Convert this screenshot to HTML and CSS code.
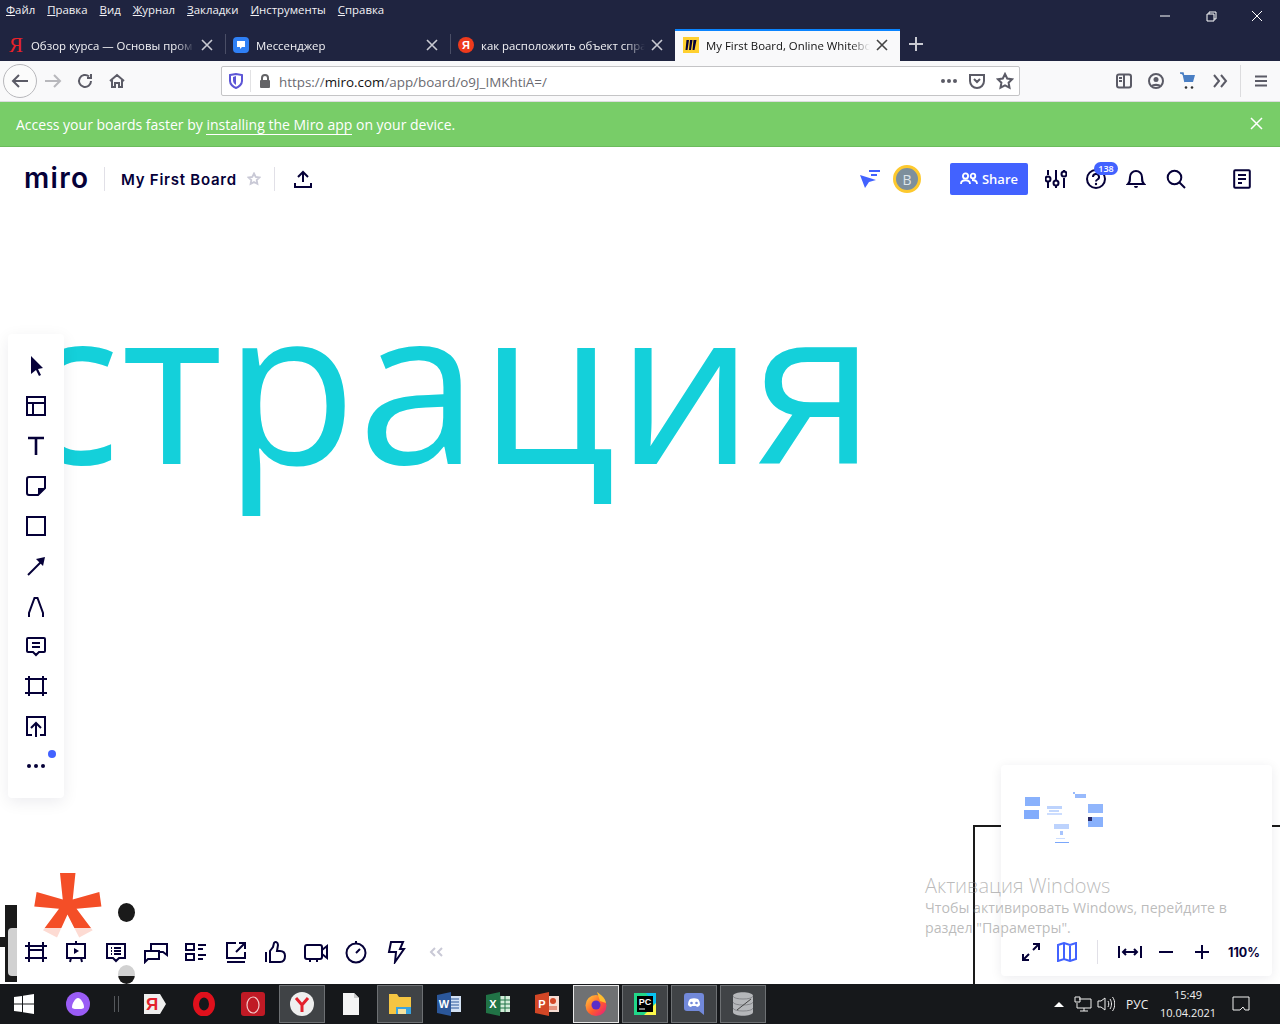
FILE: index.html
```html
<!DOCTYPE html>
<html lang="ru">
<head>
<meta charset="utf-8">
<title>My First Board, Online Whiteboard</title>
<link rel="stylesheet" href="styles.css">
</head>
<body>
<div class="screen">
  <header class="titlebar">
    <nav class="menu">
      <span><u>Ф</u>айл</span><span><u>П</u>равка</span><span><u>В</u>ид</span><span><u>Ж</u>урнал</span><span><u>З</u>акладки</span><span><u>И</u>нструменты</span><span><u>С</u>правка</span>
    </nav>
    <div class="winctl">
      <svg width="46" height="27" viewBox="0 0 46 27"><path d="M18 16h10" class="wl"/></svg>
      <svg width="46" height="27" viewBox="0 0 46 27"><path d="M19 14h7v7h-7zM21 14v-2h7v7h-2" class="wl"/></svg>
      <svg width="46" height="27" viewBox="0 0 46 27"><path d="M18 11l10 10M28 11L18 21" class="wl"/></svg>
    </div>
  </header>
  <div class="tabs">
    <div class="tab">
      <span class="fav ya">Я</span><span class="tt">Обзор курса — Основы пром</span>
      <svg class="tx" width="12" height="12" viewBox="0 0 12 12"><path d="M1 1l10 10M11 1L1 11"/></svg>
    </div>
    <div class="tab sep">
      <svg class="fav" width="16" height="16" viewBox="0 0 16 16"><rect width="16" height="16" rx="4" fill="#2f80f5"/><path d="M4 4h8v6H9l-2 2v-2H4z" fill="#fff"/></svg><span class="tt">Мессенджер</span>
      <svg class="tx" width="12" height="12" viewBox="0 0 12 12"><path d="M1 1l10 10M11 1L1 11"/></svg>
    </div>
    <div class="tab sep">
      <svg class="fav" width="16" height="16" viewBox="0 0 16 16"><circle cx="8" cy="8" r="8" fill="#ee3a1c"/><text x="8" y="12" class="favt">Я</text></svg><span class="tt">как расположить объект спра</span>
      <svg class="tx" width="12" height="12" viewBox="0 0 12 12"><path d="M1 1l10 10M11 1L1 11"/></svg>
    </div>
    <div class="tab active">
      <svg class="fav" width="16" height="16" viewBox="0 0 16 16"><rect width="16" height="16" fill="#ffd02f"/><path d="M3.500 3h2.500L4.500 13H2.500zM7 3h2.500L8 13H6zM10.500 3H13.500L11.500 13H9.500z" fill="#050038"/></svg><span class="tt">My First Board, Online Whitebo</span>
      <svg class="tx" width="12" height="12" viewBox="0 0 12 12"><path d="M1 1l10 10M11 1L1 11"/></svg>
    </div>
    <svg class="newtab" width="14" height="14" viewBox="0 0 14 14"><path d="M7 0v14M0 7h14"/></svg>
  </div>
  <div class="navbar">
    <div class="back"><svg width="18" height="18" viewBox="0 0 18 18"><path d="M17 9H2M8 3L2 9l6 6" class="ni"/></svg></div>
    <svg class="nb" width="32" height="18" viewBox="0 0 32 18"><path d="M8 9h15M17 3l6 6-6 6" class="ni dim"/></svg>
    <svg class="nb" width="32" height="18" viewBox="0 0 32 18"><path d="M22 9a6 6 0 1 1-2-4.500M22 2v4h-4" class="ni"/></svg>
    <svg class="nb" width="32" height="18" viewBox="0 0 32 18"><path d="M9 9l7-6 7 6M11 8v7h3v-4h4v4h3V8" class="ni"/></svg>
    <div class="urlbar">
      <svg class="shield" width="14" height="16" viewBox="0 0 14 16"><path d="M1 2l6-1 6 1v6c0 3-3 6-6 7-3-1-6-4-6-7z" fill="none" stroke="#5c55d6" stroke-width="2"/><path d="M7 3v9c-2-1-3-3-3-5V4z" fill="#5c55d6"/></svg>
      <span class="ubsep"></span>
      <svg class="lock" width="14" height="16" viewBox="0 0 14 16"><path d="M4 7V5a3 3 0 0 1 6 0v2" fill="none" stroke="#636366" stroke-width="2"/><rect x="2" y="7" width="10" height="8" rx="1" fill="#636366"/></svg>
      <span class="url">https://<b>miro.com</b>/app/board/o9J_IMKhtiA=/</span>
      <span class="ubdots"><i></i><i></i><i></i></span>
      <svg class="ubi" width="18" height="18" viewBox="0 0 18 18"><path d="M2 3h14v6a7 7 0 0 1-14 0zM6 7l3 3 3-3" class="ni"/></svg>
      <svg class="ubi" width="18" height="18" viewBox="0 0 18 18"><path d="M9 2l2.200 4.500 5 .7-3.600 3.500.9 5L9 13.300 4.500 15.700l.9-5L1.800 7.200l5-.7z" class="ni"/></svg>
    </div>
    <div class="navright">
      <svg width="32" height="18" viewBox="0 0 32 18"><rect x="9" y="2.500" width="14" height="13" rx="2" class="ni"/><path d="M16 3v12M11 6h3M11 9h3" class="ni"/></svg>
      <svg width="32" height="18" viewBox="0 0 32 18"><circle cx="16" cy="9" r="7" class="ni"/><circle cx="16" cy="7.500" r="2.500" fill="#5b5b66"/><path d="M11 14c1-3 9-3 10 0z" fill="#5b5b66"/></svg>
      <svg width="32" height="18" viewBox="0 0 32 18"><path d="M8 1h3l2 9h8l2-7H11z" fill="#4a7fc4"/><path d="M8 1h3l2 9" fill="none" stroke="#4a7fc4" stroke-width="1.500"/><circle cx="14" cy="15.500" r="1.300" fill="#333"/><circle cx="20" cy="15.500" r="1.300" fill="#333"/></svg>
      <svg width="32" height="18" viewBox="0 0 32 18"><path d="M10 3l5 6-5 6M17 3l5 6-5 6" class="ni"/></svg>
      <span class="navsep"></span>
      <svg width="12" height="12" viewBox="0 0 12 12"><path d="M0 1.500h12M0 6h12M0 10.500h12" class="ni"/></svg>
    </div>
  </div>
  <div class="banner">
    <p class="bantext">Access your boards faster by <a>installing the Miro app</a> on your device.</p>
    <svg class="banx" width="13" height="13" viewBox="0 0 13 13"><path d="M1 1l11 11M12 1L1 12"/></svg>
  </div>
  <main class="app">
    <div class="board">
      <div class="big">страция</div>
      <div class="aster">*</div>
      <div class="dot d1"></div>
      <div class="dot d2"></div>
      <div class="hbar"></div>
      <div class="hcross"></div>
      <div class="frame"></div>
    </div>
    <div class="topbar">
      <div class="logo">miro</div>
      <span class="tsep"></span>
      <div class="bname">My First Board</div>
      <svg class="bstar" width="14" height="14" viewBox="0 0 14 14"><path d="M7 1.500l1.700 3.500 3.800.5-2.800 2.600.7 3.800L7 10.100l-3.400 1.800.7-3.800L1.500 5.500l3.800-.5z" fill="none" stroke="#c9c9d6" stroke-width="1.800"/></svg>
      <span class="tsep t2"></span>
      <svg class="upl" width="18" height="18" viewBox="0 0 18 18"><path d="M9 12V2M4 7l5-5 5 5M1 13v4h16v-4" class="ic"/></svg>
      <div class="tright">
        <svg class="flock" width="24" height="20" viewBox="0 0 24 20"><path d="M1 6l16 5-7 2-4 6z" fill="#4262ff"/><path d="M10 2h11M12 6h6" stroke="#4262ff" stroke-width="2"/></svg>
        <div class="avatar">B</div>
        <button class="share"><svg width="18" height="14" viewBox="0 0 18 14"><circle cx="5.500" cy="4" r="2.600" fill="none" stroke="#fff" stroke-width="1.800"/><circle cx="13" cy="4" r="2.300" fill="none" stroke="#fff" stroke-width="1.800"/><path d="M1 12c0-5 9-5 9 0M12 8c3 0 5 1 5 4" fill="none" stroke="#fff" stroke-width="1.800"/></svg>Share</button>
        <div class="tic"><svg width="22" height="20" viewBox="0 0 22 20"><path d="M3 1v5M3 13v6M11 1v10M11 17v2M19 1v1M19 9v10" class="ic"/><circle cx="3" cy="10" r="2.500" class="ic"/><circle cx="11" cy="14" r="2.500" class="ic"/><circle cx="19" cy="5" r="2.500" class="ic"/></svg></div>
        <div class="tic help"><svg width="22" height="22" viewBox="0 0 22 22"><circle cx="11" cy="11" r="9" class="ic"/><path d="M8 9a3 3 0 1 1 4.500 2.500c-1 .6-1.500 1-1.500 2" class="ic"/><circle cx="11" cy="16" r="1.200" fill="#050038"/></svg><span class="badge">138</span></div>
        <div class="tic"><svg width="20" height="20" viewBox="0 0 20 20"><path d="M2 15c2-2 2-3 2-7a6 6 0 0 1 12 0c0 4 0 5 2 7z" class="ic"/><path d="M8 17a2 2 0 0 0 4 0" fill="#050038"/></svg></div>
        <div class="tic"><svg width="20" height="20" viewBox="0 0 20 20"><circle cx="8.500" cy="8.500" r="6.800" class="ic"/><path d="M13.500 13.500L19 19" class="ic"/></svg></div>
        <div class="tic notes"><svg width="18" height="20" viewBox="0 0 18 20"><rect x="1.200" y="1.200" width="15.600" height="17.600" rx="1" class="ic"/><path d="M5 6h8M5 10h8M5 14h4" class="ic"/></svg></div>
      </div>
    </div>

    <aside class="tools">
      <svg class="ti" width="24" height="24" viewBox="0 0 24 24"><path d="M7 2l12 12-5 1 3 6-2 1-3-6-5 4z" fill="#050038"/></svg>
      <svg class="ti" width="24" height="24" viewBox="0 0 24 24"><path d="M3 3h18v18H3zM3 9h18M9 9v12" class="ic"/></svg>
      <svg class="ti" width="24" height="24" viewBox="0 0 24 24"><path d="M4 4h16M12 4v17" class="ic th"/></svg>
      <svg class="ti" width="24" height="24" viewBox="0 0 24 24"><path d="M3 5a2 2 0 0 1 2-2h16v11l-7 7H5a2 2 0 0 1-2-2z" class="ic"/><path d="M21 14h-7v7z" fill="#050038"/></svg>
      <svg class="ti" width="24" height="24" viewBox="0 0 24 24"><rect x="3" y="3" width="18" height="18" class="ic"/></svg>
      <svg class="ti" width="24" height="24" viewBox="0 0 24 24"><path d="M4 21L18 7" class="ic"/><path d="M21 3l-9 2 7 7z" fill="#050038"/></svg>
      <svg class="ti" width="24" height="24" viewBox="0 0 24 24"><path d="M5 23v-4L10.500 4h3L19 19v4" class="ic"/></svg>
      <svg class="ti" width="24" height="24" viewBox="0 0 24 24"><path d="M4 4h16a1 1 0 0 1 1 1v12a1 1 0 0 1-1 1h-5l-3 3-3-3H4a1 1 0 0 1-1-1V5a1 1 0 0 1 1-1zM8 9h8M8 13h8" class="ic"/></svg>
      <svg class="ti" width="24" height="24" viewBox="0 0 24 24"><path d="M5 2v20M19 2v20M1 5h22M1 19h22" class="ic"/></svg>
      <svg class="ti" width="24" height="24" viewBox="0 0 24 24"><path d="M8 21H3V3h18v18h-5M12 23V10M7 14l5-5 5 5" class="ic"/></svg>
      <div class="more"><span class="mdot"></span><i></i><i></i><i></i></div>
    </aside>

    <div class="bottombar">
      <svg class="bi" width="24" height="24" viewBox="0 0 24 24"><path d="M5 2v20M19 2v20M1 6h22M1 18h22M5 10h14" class="ic"/></svg>
      <svg class="bi" width="24" height="24" viewBox="0 0 24 24"><path d="M3 4h18a1 1 0 0 1 0 0v14H3zM7 18l-1 4M17 18l1 4M12 4V1" class="ic"/><path d="M10 8l5 3-5 3z" fill="#050038"/></svg>
      <svg class="bi" width="24" height="24" viewBox="0 0 24 24"><path d="M3 4h18v14h-6l-3 3-3-3H3zM7 8h1M7 11h1M7 14h1M10 8h7M10 11h7M10 14h7" class="ic"/></svg>
      <svg class="bi" width="24" height="24" viewBox="0 0 24 24"><path d="M1 22V11h14v8H4zM7 11V4h16v11l-4-3h-4" class="ic"/></svg>
      <svg class="bi" width="24" height="24" viewBox="0 0 24 24"><path d="M2 4h8v6H2zM2 14h8v6H2zM14 5h8M14 9h5M14 15h8M14 19h5" class="ic"/></svg>
      <svg class="bi" width="24" height="24" viewBox="0 0 24 24"><path d="M12 3H3v15h18v-6M3 22h18M12 12L21 3M15 3h6v6" class="ic"/></svg>
      <svg class="bi" width="24" height="24" viewBox="0 0 24 24"><path d="M2 12v10M6 22h10c3 0 5-2 5-6 0-3-2-5-5-5h-3l1-6c0-3-3-4-4-2l-1 4-3 4z" class="ic"/></svg>
      <svg class="bi" width="24" height="24" viewBox="0 0 24 24"><rect x="1" y="5" width="17" height="14" rx="2" class="ic"/><path d="M18 10l5-4v12l-5-4M6 19v3M13 19v3" class="ic"/></svg>
      <svg class="bi" width="24" height="24" viewBox="0 0 24 24"><circle cx="12" cy="13" r="9.500" class="ic"/><path d="M12 1v2M12 13l4-4" class="ic"/></svg>
      <svg class="bi" width="24" height="24" viewBox="0 0 24 24"><path d="M7 2h12l-3 7h4l-9 13 1-10H5z" class="ic"/></svg>
      <svg class="bi" width="24" height="24" viewBox="0 0 24 24"><path d="M11 8l-4 4 4 4M18 8l-4 4 4 4" fill="none" stroke="#c9c9d6" stroke-width="2"/></svg>
    </div>

    <aside class="minimap">
      <svg class="thumb" width="271" height="163" viewBox="1001 765 271 163">
        <g fill="#6c9dfb">
          <rect x="1025" y="797" width="15" height="9" opacity=".8"/>
          <rect x="1024" y="810" width="15" height="9" opacity=".85"/>
          <rect x="1047" y="806" width="15" height="3" opacity=".45"/>
          <rect x="1049" y="810" width="10" height="2" opacity=".4"/>
          <rect x="1047" y="813" width="15" height="2" opacity=".35"/>
          <rect x="1073" y="792" width="2" height="2" opacity=".7"/>
          <rect x="1075" y="794" width="11" height="4" opacity=".7"/>
          <rect x="1088" y="804" width="15" height="9" opacity=".75"/>
          <rect x="1088" y="817" width="15" height="10" opacity=".8"/>
          <rect x="1054" y="824" width="15" height="5" opacity=".45"/>
          <rect x="1060" y="831" width="3" height="4" opacity=".6"/>
          <rect x="1056" y="838" width="9" height="1" opacity=".35"/>
          <rect x="1055" y="842" width="14" height="1" opacity=".9"/>
        </g>
        <rect x="1088" y="817" width="4" height="4" fill="#2a2a66"/>
      </svg>
      <div class="mapbar">
        <svg class="mi" width="20" height="20" viewBox="0 0 20 20"><path d="M2 18l6-6M2 12v6h6M18 2l-6 6M12 2h6v6" class="ic"/></svg>
        <svg class="mi blue" width="20" height="20" viewBox="0 0 20 20"><path d="M1 3l6-2 6 2 6-2v16l-6 2-6-2-6 2zM7 1v16M13 3v16" class="ib"/></svg>
        <span class="msep"></span>
        <svg class="mw" width="24" height="14" viewBox="0 0 24 14"><path d="M1 1v12M23 1v12M5 7h14M8 4L5 7l3 3M16 4l3 3-3 3" class="ic"/></svg>
        <svg class="mc" width="14" height="14" viewBox="0 0 14 14"><path d="M0 7h14" class="ic"/></svg>
        <svg class="mc m2" width="14" height="14" viewBox="0 0 14 14"><path d="M0 7h14M7 0v14" class="ic"/></svg>
        <span class="zoomv">110%</span>
      </div>
    </aside>

    <div class="activate">
      <div class="a1">Активация Windows</div>
      <div class="a2">Чтобы активировать Windows, перейдите в<br>раздел "Параметры".</div>
    </div>
  </main>
  <footer class="taskbar">
    <div class="startb"><svg width="20" height="20" viewBox="0 0 20 20"><path d="M0 3l8-1v7.500H0zM9 1.800L20 0v9.500H9zM0 10.500h8V18l-8-1zM9 10.500h11V20L9 18.200z" fill="#fff"/></svg></div>
    <div class="tslot alice"><svg width="24" height="24" viewBox="0 0 24 24"><circle cx="12" cy="12" r="12" fill="#9a5cf5"/><path d="M12 6c3 0 6 6 6 9 0 2-3 2-6 2s-6 0-6-2c0-3 3-9 6-9z" fill="#fff"/></svg></div>
    <div class="grip"></div>
    <div class="tslot"><svg width="24" height="24" viewBox="0 0 24 24"><path d="M1 2h16l6 10-6 10H1z" fill="#efefef"/><text x="9" y="18" class="tyb">Я</text></svg></div>
    <div class="tslot"><svg width="24" height="24" viewBox="0 0 24 24"><ellipse cx="12" cy="12" rx="8" ry="9.500" fill="none" stroke="#e0101c" stroke-width="6"/></svg></div>
    <div class="tslot"><svg width="24" height="24" viewBox="0 0 24 24"><rect width="24" height="24" rx="3" fill="#c01a25"/><ellipse cx="12" cy="13" rx="6" ry="8" fill="none" stroke="#f2c8c8" stroke-width="1.200"/></svg></div>
    <div class="tslot on"><svg width="24" height="24" viewBox="0 0 24 24"><circle cx="12" cy="12" r="12" fill="#eee"/><path d="M6 6l6 7 6-7M12 13v7" fill="none" stroke="#e3202c" stroke-width="3"/></svg></div>
    <div class="tslot"><svg width="18" height="24" viewBox="0 0 18 24"><path d="M1 1h11l5 5v17H1z" fill="#f4f4f4"/><path d="M12 1v5h5" fill="#ccc"/></svg></div>
    <div class="tslot on"><svg width="24" height="22" viewBox="0 0 24 22"><path d="M1 1h8l2 3h12v17H1z" fill="#f5c542"/><path d="M8 14h15v7H8z" fill="#3aa4e0"/><path d="M10 16h8v5h-8z" fill="#f5e3a0"/></svg></div>
    <div class="tslot"><svg width="24" height="24" viewBox="0 0 24 24"><rect x="9" y="4" width="15" height="16" fill="#d4e2f4"/><path d="M12 7h10M12 10h10M12 13h10M12 16h10" stroke="#2b579a"/><path d="M0 3l14-3v24L0 21z" fill="#2b579a"/><text x="7" y="16" class="tw">W</text></svg></div>
    <div class="tslot"><svg width="24" height="24" viewBox="0 0 24 24"><rect x="9" y="4" width="15" height="16" fill="#d3ecd9"/><path d="M14 4v16M19 4v16M9 8h15M9 12h15M9 16h15" stroke="#217346"/><path d="M0 3l14-3v24L0 21z" fill="#217346"/><text x="7" y="16" class="tw">X</text></svg></div>
    <div class="tslot"><svg width="24" height="24" viewBox="0 0 24 24"><rect x="9" y="4" width="15" height="16" fill="#f6ddd3"/><circle cx="18" cy="9" r="3" fill="#d24726"/><path d="M13 15h9M13 17h9" stroke="#d24726"/><path d="M0 3l14-3v24L0 21z" fill="#d24726"/><text x="7" y="16" class="tw">P</text></svg></div>
    <div class="tslot fx"><svg width="24" height="24" viewBox="0 0 24 24"><defs><linearGradient id="fxg" x1="0" y1="0" x2="1" y2="1"><stop offset="0" stop-color="#ffd13d"/><stop offset=".55" stop-color="#ff5b2c"/><stop offset="1" stop-color="#e31587"/></linearGradient></defs><circle cx="12" cy="13.500" r="10.500" fill="url(#fxg)"/><path d="M13 0c4 3 8 5 9 11l-6-2z" fill="#ffbd2e"/><circle cx="12" cy="13" r="4.500" fill="#5a2dc8"/></svg></div>
    <div class="tslot on"><svg width="22" height="22" viewBox="0 0 22 22"><rect width="22" height="22" fill="#21d789"/><path d="M12 0h10v14z" fill="#07c3f2"/><path d="M22 10v12H10z" fill="#fcf84a"/><rect x="3" y="3" width="16" height="16" fill="#000"/><text x="11" y="12" class="tpc">PC</text><path d="M5 16h6" stroke="#fff"/></svg></div>
    <div class="tslot on"><svg width="20" height="22" viewBox="0 0 20 22"><path d="M3 0h14a3 3 0 0 1 3 3v19l-5-4H3a3 3 0 0 1-3-3V3a3 3 0 0 1 3-3z" fill="#7289da"/><path d="M4 12c0-3 1-5 2-6 3-1 5-1 8 0 1 1 2 3 2 6-1 1-2 2-3 2l-1-1H8l-1 1c-1 0-2-1-3-2z" fill="#fff"/><circle cx="7.500" cy="10" r="1.300" fill="#7289da"/><circle cx="12.500" cy="10" r="1.300" fill="#7289da"/></svg></div>
    <div class="tslot on"><svg width="20" height="24" viewBox="0 0 20 24"><path d="M0 4c0-5 20-5 20 0v16c0 5-20 5-20 0z" fill="#b5b7ba"/><path d="M0 4c0 4 20 4 20 0M0 10c0 4 20 4 20 0M0 16c0 4 20 4 20 0" fill="none" stroke="#85878b"/><path d="M4 18L18 7" stroke="#444"/></svg></div>
    <div class="tray">
      <svg class="tr1" width="10" height="5" viewBox="0 0 10 5"><path d="M5 0l5 5H0z" fill="#fff"/></svg>
      <svg class="tr2" width="18" height="16" viewBox="0 0 18 16"><path d="M5 3h12v9H3V7M10 12v3M6 15h8" class="tl"/><path d="M1 1h5v5H1z" class="tl"/></svg>
      <svg class="tr3" width="18" height="16" viewBox="0 0 18 16"><path d="M1 5h3l4-3v12l-4-3H1zM11 5c1 2 1 4 0 6M13 3c2 3 2 7 0 10M15.500 1c3 4 3 10 0 14" class="tl"/></svg>
      <span class="lang">РУС</span>
      <div class="clock"><span>15:49</span><span>10.04.2021</span></div>
      <svg class="note" width="18" height="16" viewBox="0 0 18 16"><path d="M1 1h16v13h-4l-2-3-3 3H1z" class="tl"/></svg>
    </div>
  </footer>
</div>
</body>
</html>
```
FILE: styles.css
```css
* { box-sizing: border-box; }
html, body { margin: 0; height: 100%; overflow: hidden; background: #fff; }
.screen { width: 1280px; height: 1024px; display: flex; flex-direction: column; overflow: hidden; font-family: "Open Sans", "Noto Sans", sans-serif; }

.titlebar { height: 27px; background: #1f2440; color: #fff; display: flex; justify-content: space-between; align-items: flex-start; flex: none; }
.menu { display: flex; gap: 12px; padding: 1px 0 0 6px; font-size: 11.400px; line-height: 17px; color: #f2f2f5; }
.winctl { display: flex; }
.winctl svg { display: block; }
.wl { fill: none; stroke: #fff; stroke-width: 1; }

.tabs { height: 34px; background: #1f2440; display: flex; align-items: stretch; flex: none; }
.tab { width: 225px; display: flex; align-items: center; padding: 2px 0 0 8px; color: #f2f2f5; font-size: 11.400px; position: relative; }
.tab.sep::before { content: ""; position: absolute; left: 0; top: 7px; height: 20px; border-left: 1px solid #4a4e66; }
.tab.active { background: #f9f9fa; color: #111; border-top: 2px solid #0a84ff; margin-top: 2px; padding: 0 0 2px 8px; }
.fav { width: 16px; height: 16px; flex: none; display: block; }
.ya { color: #e8222a; font-size: 21px; line-height: 16px; text-align: center; font-family: "Liberation Serif", serif; }
.favt { fill: #fff; font: 700 11px "Liberation Sans", sans-serif; text-anchor: middle; }
.tt { width: 164px; margin-left: 7px; white-space: nowrap; overflow: hidden; -webkit-mask-image: linear-gradient(to right, #000 88%, transparent 100%); mask-image: linear-gradient(to right, #000 88%, transparent 100%); }
.tx { margin-left: 6px; flex: none; }
.tx path { stroke: #c9cad2; stroke-width: 1.600; fill: none; }
.active .tx path { stroke: #444; }
.newtab { align-self: center; margin-left: 9px; }
.newtab path { stroke: #c9cad2; stroke-width: 2; fill: none; }

.navbar { height: 41px; background: #f9f9fa; border-bottom: 1px solid #dcdcde; display: flex; align-items: center; padding-left: 3px; flex: none; }
.back { width: 34px; height: 34px; border-radius: 50%; border: 1px solid #b8b8bc; display: flex; align-items: center; justify-content: center; background: #fbfbfb; }
.nb { flex: none; display: block; }
.ni { fill: none; stroke: #5b5b66; stroke-width: 2; }
.ni.dim { stroke: #b8b8bc; }
.urlbar { width: 799px; height: 30px; margin-left: 88px; background: #fff; border: 1px solid #c4c4c6; border-radius: 2px; display: flex; align-items: center; padding: 0 5px 0 7px; flex: none; }
.shield { flex: none; }
.ubsep { width: 1px; height: 22px; background: #e2e2e4; margin-left: 7px; }
.lock { margin-left: 7px; flex: none; }
.url { margin-left: 7px; padding-top: 1px; font-size: 13.400px; color: #6a6a70; white-space: nowrap; flex: 1; }
.url b { font-weight: 400; color: #111; }
.ubdots { display: flex; gap: 2px; margin-right: 11px; }
.ubdots i { width: 4px; height: 4px; border-radius: 50%; background: #5b5b66; }
.ubi { margin-left: 10px; flex: none; }
.ubdots + .ubi { margin-left: 0; }
.navright { display: flex; align-items: center; margin-left: 88px; }
.navsep { width: 1px; height: 32px; background: #dcdcde; margin: 0 14px 0 4px; }

.banner { height: 45px; background: #78cd68; border-bottom: 1px solid #6bbb5c; color: #fff; display: flex; align-items: center; justify-content: space-between; padding: 0 17px 0 16px; flex: none; }
.bantext { margin: 0; font-size: 14px; }
.bantext a { border-bottom: 1px solid #fff; }
.banx { margin-top: -2px; }
.banx path { stroke: #fff; stroke-width: 1.500; fill: none; }

.app { flex: 1; position: relative; background: #fff; overflow: hidden; }
.board { position: absolute; inset: 0; overflow: hidden; }
.big { position: absolute; left: 16px; top: 83px; font-size: 217px; letter-spacing: 1px; line-height: 300px; color: #14d0da; white-space: nowrap; }
.aster { position: absolute; left: 29px; top: 709px; font-size: 142px; line-height: 140px; font-weight: 600; color: #f44e27; }
.dot { position: absolute; left: 118px; width: 17px; height: 19px; border-radius: 50%; background: #1a1a1a; }
.d1 { top: 756px; }
.d2 { top: 818px; }
.hbar { position: absolute; left: 5px; top: 758px; width: 12px; height: 77px; background: #1a1a1a; }
.hcross { position: absolute; left: 0; top: 790px; width: 8px; height: 10px; background: #1a1a1a; }
.frame { position: absolute; left: 973px; top: 678px; width: 400px; height: 300px; border: 2px solid #1a1a1a; }

.topbar { position: relative; height: 64px; display: flex; align-items: center; padding-left: 25px; }
.logo { font: 600 28px "Inter", sans-serif; letter-spacing: 1.300px; color: #050038; width: 80px; line-height: 1; margin: -3px 0 0 -1px; }
.tsep { width: 1px; height: 24px; background: #e1e0e7; }
.bname { font: 600 15px "Inter", sans-serif; color: #050038; margin-left: 16px; letter-spacing: .75px; }
.bstar { margin-left: 10px; }
.t2 { margin-left: 13px; }
.upl { margin-left: 19px; }
.ic { fill: none; stroke: #050038; stroke-width: 2; }
.ib { fill: none; stroke: #4262ff; stroke-width: 2; }
.tright { margin-left: auto; display: flex; align-items: center; padding-right: 18px; }
.flock { margin-right: 10px; }
.avatar { width: 28px; height: 28px; border-radius: 50%; background: #7d8f9c; border: 3px solid #fdc92e; color: #dfe5ea; font-size: 14px; display: flex; align-items: center; justify-content: center; margin-right: 29px; }
.share { width: 78px; height: 32px; background: #4262ff; border: 0; border-radius: 2px; color: #fff; font: 600 13px "Open Sans", sans-serif; display: flex; align-items: center; justify-content: center; gap: 4px; padding: 0; margin-right: 8px; }
.tic { width: 40px; height: 32px; display: flex; align-items: center; justify-content: center; position: relative; }
.notes { margin-left: 26px; }
.badge { position: absolute; left: 18px; top: -1px; width: 24px; height: 13px; border-radius: 7px; background: #4262ff; color: #fff; font-size: 9px; font-weight: 600; line-height: 13px; text-align: center; }

.tools { position: absolute; left: 8px; top: 187px; width: 56px; height: 464px; padding-top: 12px; background: #fff; border-radius: 4px; box-shadow: 0 4px 16px rgba(5, 0, 56, .08); display: flex; flex-direction: column; align-items: center; }
.ti { margin: 8px 0; flex: none; display: block; }
.th { stroke-width: 2.600; }
.more { position: relative; height: 40px; width: 40px; display: flex; align-items: center; justify-content: center; gap: 3px; }
.more i { width: 4px; height: 4px; border-radius: 50%; background: #050038; }
.mdot { position: absolute; left: 32px; top: 4px; width: 8px; height: 8px; border-radius: 50%; background: #4262ff; }

.bottombar { position: absolute; left: 8px; top: 781px; width: 452px; height: 48px; padding-left: 8px; border-radius: 4px; background: rgba(255, 255, 255, .8); display: flex; align-items: center; }
.bi { margin: 0 8px; flex: none; display: block; }

.minimap { position: absolute; left: 1001px; top: 618px; width: 271px; height: 211px; background: #fff; border-radius: 4px; box-shadow: 0 2px 12px rgba(5, 0, 56, .08); display: flex; flex-direction: column; }
.thumb { display: block; flex: none; filter: blur(.6px); }
.mapbar { height: 48px; display: flex; align-items: center; padding-left: 20px; }
.mi { flex: none; }
.mi.blue { margin-left: 16px; }
.msep { width: 1px; height: 24px; background: #e1e0e7; margin-left: 20px; }
.mw { margin-left: 20px; flex: none; }
.mc { flex: none; margin-left: 17px; }
.mc.m2 { margin-left: 22px; }
.zoomv { margin-left: 19px; font: 700 12.500px "Inter", sans-serif; color: #050038; }

.activate { position: absolute; left: 925px; top: 726px; color: rgba(120, 120, 120, .5); white-space: nowrap; pointer-events: none; }
.a1 { font-size: 20px; line-height: 26px; font-weight: 300; }
.a2 { font-size: 14.200px; line-height: 20px; margin-top: -1px; font-weight: 400; }

.taskbar { height: 40px; background: #16181b; display: flex; align-items: center; flex: none; }
.startb { width: 48px; height: 40px; display: flex; align-items: center; justify-content: center; margin-right: 7px; }
.tslot { width: 46px; height: 38px; margin-right: 3px; display: flex; align-items: center; justify-content: center; border: 1px solid transparent; flex: none; }
.tslot.alice { margin-right: 0; }
.grip { width: 31px; height: 16px; position: relative; flex: none; }
.grip::before { content: ""; position: absolute; left: 13px; top: 0; width: 3px; height: 16px; border-left: 1px solid #55585c; border-right: 1px solid #55585c; }
.tslot.on { background: #404346; border-color: #6d7073; }
.tslot.fx { background: #6f7173; border-color: #e8e8e8; }
.tyb { fill: #e3202c; font: 700 17px "Liberation Sans", sans-serif; text-anchor: middle; }
.tw { fill: #fff; font: 700 11px "Liberation Sans", sans-serif; text-anchor: middle; }
.tpc { fill: #fff; font: 700 9px "Liberation Sans", sans-serif; text-anchor: middle; }
.tray { margin-left: auto; display: flex; align-items: center; color: #f0f0f0; }
.tr1 { margin-right: 10px; }
.tr2 { margin-right: 5px; }
.tl { fill: none; stroke: #f0f0f0; stroke-width: 1; }
.lang { font-size: 12px; margin-left: 11px; width: 31px; }
.clock { width: 62px; display: flex; flex-direction: column; align-items: center; font-size: 11px; line-height: 18px; }
.note { margin: 0 30px 0 13px; }
```
